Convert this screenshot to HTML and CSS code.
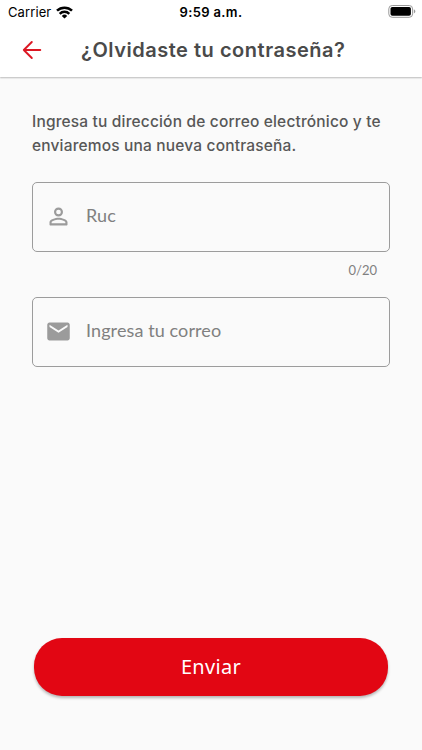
FILE: index.html
```html
<!DOCTYPE html>
<html lang="es">
<head>
<meta charset="utf-8">
<title>¿Olvidaste tu contraseña?</title>
<link rel="stylesheet" href="styles.css">
</head>
<body>
<div class="screen">
  <header class="header">
    <div class="status">
      <div class="network"><span class="carrier">Carrier</span>
        <svg class="wifi" width="17" height="13" viewBox="0 0 17 13" fill="none" stroke="#000" stroke-width="2.5"><path d="M1 4.7a10.7 10.7 0 0 1 15 0M3.7 7.8a6.8 6.8 0 0 1 9.6 0"/><path d="M8.5 12.6 5.8 9.9a3.8 3.8 0 0 1 5.4 0z" fill="#000" stroke="none"/></svg>
      </div>
      <span class="clock">9:59 a.m.</span>
      <svg class="battery" width="28" height="14" viewBox="0 0 28 14"><rect x=".8" y=".5" width="23.8" height="11.8" rx="3.4" fill="none" stroke="#999" stroke-width="1"/><rect x="2.5" y="2" width="20.4" height="8.8" rx="1.8"/><path d="M25.9 4.3c2 .8 2 3.4 0 4.2z" fill="#999"/></svg>
    </div>
    <div class="appbar">
      <svg class="back" width="20" height="20" viewBox="0 0 20 20" fill="none" stroke="#dc1723" stroke-width="1.9" stroke-linecap="round" stroke-linejoin="round"><path d="M18.3 10H1.8M9.8 2 1.8 10l8 8"/></svg>
      <h1 class="title">¿Olvidaste tu contraseña?</h1>
    </div>
  </header>
  <main class="content">
    <p class="intro"><span class="line">Ingresa tu dirección de correo electrónico y te</span><span class="line">enviaremos una nueva contraseña.</span></p>
    <div class="field">
      <svg class="icon" viewBox="0 0 24 24"><path d="M12 5.9a2.1 2.1 0 1 1 0 4.2 2.1 2.1 0 0 1 0-4.2m0 9c2.97 0 6.1 1.46 6.1 2.1v1.1H5.9V17c0-.64 3.13-2.1 6.1-2.1M12 4C9.79 4 8 5.79 8 8s1.79 4 4 4 4-1.79 4-4-1.79-4-4-4zm0 9c-2.67 0-8 1.34-8 4v2c0 .55.45 1 1 1h14c.55 0 1-.45 1-1v-2c0-2.66-5.33-4-8-4z"/></svg>
      <span class="placeholder">Ruc</span>
    </div>
    <div class="counter">0/20</div>
    <div class="field">
      <svg class="icon" viewBox="0 0 24 24"><path d="M20 4H4c-1.1 0-2 .9-2 2v12c0 1.1.9 2 2 2h16c1.1 0 2-.9 2-2V6c0-1.1-.9-2-2-2zm0 4-8 5-8-5V6l8 5 8-5v2z"/></svg>
      <span class="placeholder">Ingresa tu correo</span>
    </div>
    <button class="send">Enviar</button>
  </main>
</div>
</body>
</html>
```
FILE: styles.css
```css
* { box-sizing: border-box; }
body { margin: 0; font-family: Inter, "Liberation Sans", sans-serif; background: #fafafa; }
.screen { width: 422px; height: 750px; display: flex; flex-direction: column; overflow: hidden; }
.header { height: 77px; flex: none; background: #fff; box-shadow: 0 1px 1.5px rgba(0,0,0,.25); }
.status { height: 24px; display: grid; grid-template-columns: 1fr auto 1fr; align-items: center; padding: 0 6px 0 8px; color: #000; }
.network { display: flex; align-items: center; gap: 5px; }
.carrier { font-size: 13px; line-height: 24px; letter-spacing: .1px; }
.clock { margin-left: -2px; font-size: 13px; font-weight: 600; line-height: 24px; letter-spacing: .35px; }
.battery { justify-self: end; }
.appbar { height: 52px; display: flex; align-items: center; padding-left: 22px; }
.title { margin: 0 0 0 39px; font-size: 20px; line-height: 28px; font-weight: 600; letter-spacing: .52px; color: #4a4a4a; white-space: nowrap; }
.content { flex: 1; display: flex; flex-direction: column; padding: 33px 32px 54px; }
.intro { margin: 0 0 24px; font-size: 15.5px; font-weight: 500; line-height: 24px; color: #575757; white-space: nowrap; }
.line { display: block; letter-spacing: .17px; }
.field { height: 70px; flex: none; border: 1px solid #9c9c9c; border-radius: 5px; display: flex; align-items: center; padding-left: 12px; }
.icon { width: 27px; height: 27px; margin-bottom: 1px; fill: #9b9b9b; }
.placeholder { margin: -5px 0 0 14px; font-family: Lato, sans-serif; font-size: 18px; line-height: 24px; letter-spacing: .1px; color: #808080; }
.counter { height: 45px; padding: 8px 13px 0 0; text-align: right; font-family: Lato, sans-serif; font-size: 13px; line-height: 20px; color: #808080; }
.send { height: 58px; margin: auto 2px 0; padding: 0 0 1px; border: 0; border-radius: 28px; background: #e20613; color: #fff; font-family: "Noto Sans", sans-serif; font-size: 20px; letter-spacing: .3px; box-shadow: 0 2px 3px rgba(0,0,0,.28); }
```
